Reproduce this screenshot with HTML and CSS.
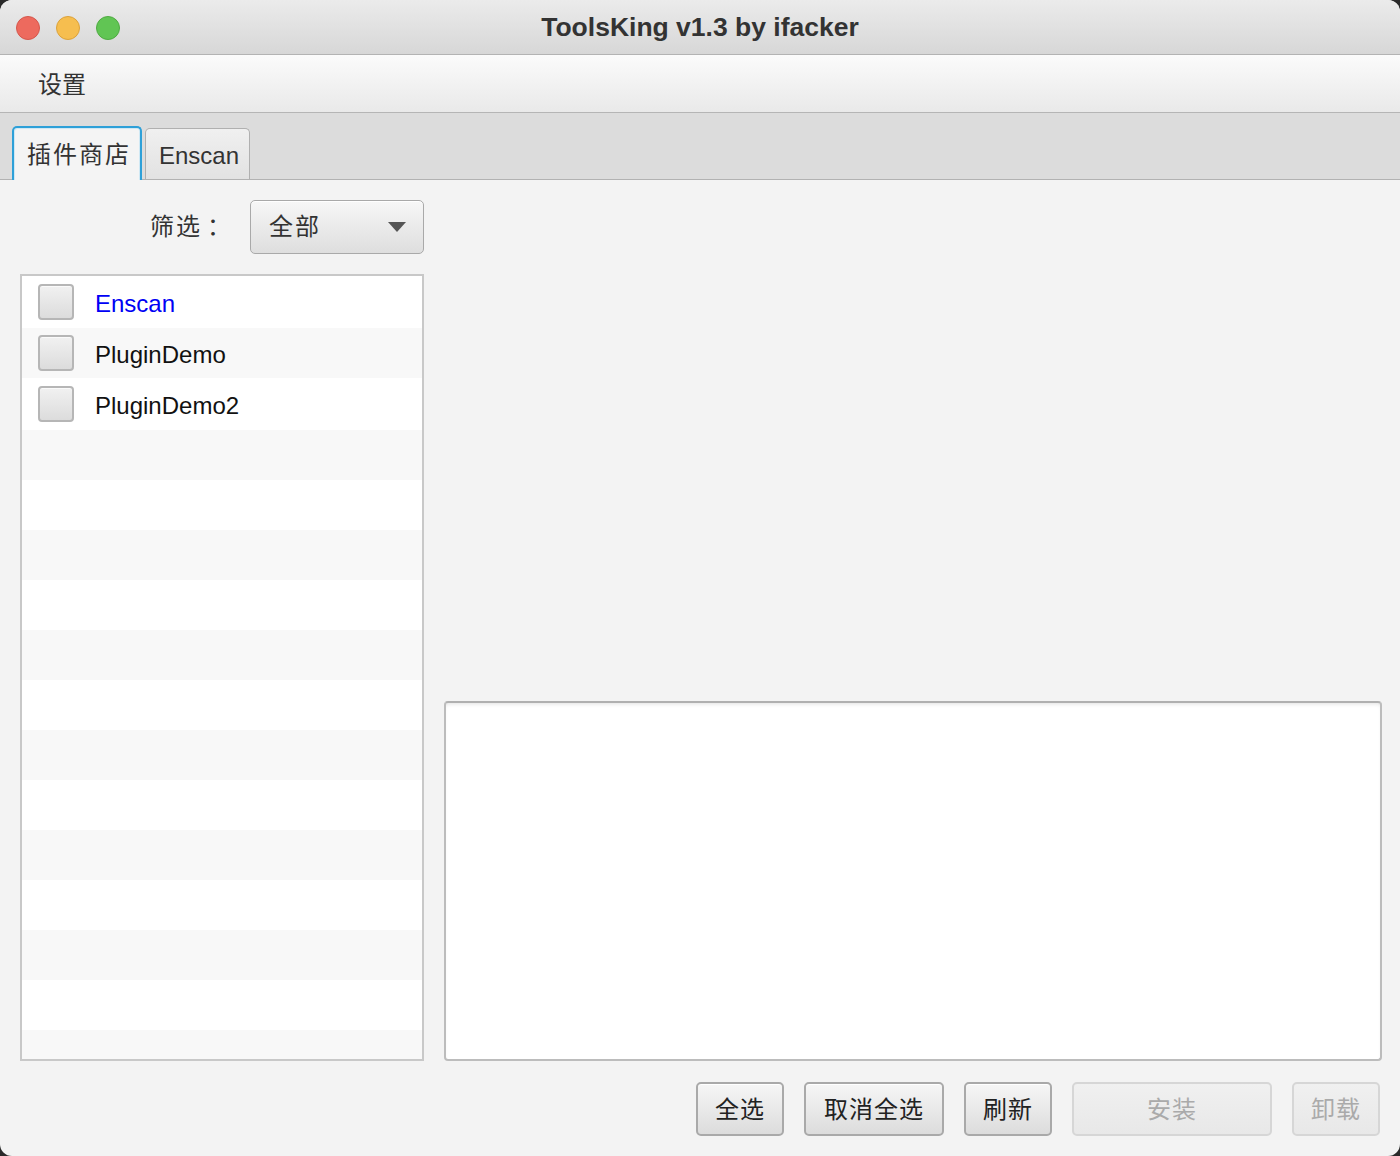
FILE: index.html
```html
<!DOCTYPE html>
<html lang="zh">
<head>
<meta charset="utf-8">
<title>ToolsKing v1.3 by ifacker</title>
<link rel="stylesheet" href="styles.css">
</head>
<body>
<div class="window">
  <div class="titlebar">
    <div class="lights">
      <span class="light red"></span>
      <span class="light yellow"></span>
      <span class="light green"></span>
    </div>
    <div class="title">ToolsKing v1.3 by ifacker</div>
  </div>
  <div class="menubar"><span class="menu">设置</span></div>
  <div class="tabbar">
    <div class="tab active">插件商店</div>
    <div class="tab">Enscan</div>
  </div>
  <div class="content">
    <div class="main">
      <div class="left">
        <div class="filter">
          <span class="filter-label">筛选<span class="colon">：</span></span>
          <div class="combo"><span class="combo-text">全部</span><span class="arrow"></span></div>
        </div>
        <div class="list">
          <div class="row r1"><span class="check"></span><span class="name blue">Enscan</span></div>
          <div class="row r2 alt"><span class="check"></span><span class="name">PluginDemo</span></div>
          <div class="row r3"><span class="check"></span><span class="name">PluginDemo2</span></div>
          <div class="row alt"></div>
          <div class="row"></div>
          <div class="row alt"></div>
          <div class="row"></div>
          <div class="row alt"></div>
          <div class="row"></div>
          <div class="row alt"></div>
          <div class="row"></div>
          <div class="row alt"></div>
          <div class="row"></div>
          <div class="row alt"></div>
          <div class="row"></div>
          <div class="row alt"></div>
        </div>
      </div>
      <div class="right">
        <div class="textarea"></div>
      </div>
    </div>
    <div class="buttons">
      <button class="btn w88">全选</button>
      <button class="btn w140">取消全选</button>
      <button class="btn w88">刷新</button>
      <button class="btn w200 disabled">安装</button>
      <button class="btn w88 disabled">卸载</button>
    </div>
  </div>
</div>
</body>
</html>
```

FILE: styles.css
```css
html, body {
  margin: 0;
  padding: 0;
  background: #2a2a2a;
}
body {
  width: 1400px;
  height: 1156px;
  overflow: hidden;
  font-family: "Liberation Sans", "Noto Sans CJK SC", sans-serif;
}
.window {
  width: 1400px;
  height: 1156px;
  border-radius: 12px;
  overflow: hidden;
  background: #f3f3f3;
  display: flex;
  flex-direction: column;
}
.titlebar {
  height: 54px;
  flex: none;
  border-bottom: 1px solid #b3b3b3;
  background: linear-gradient(#ebebeb, #d7d7d7);
  position: relative;
  display: flex;
  align-items: center;
  justify-content: center;
}
.lights {
  position: absolute;
  left: 16px;
  top: 16px;
  display: flex;
  gap: 16px;
}
.light {
  width: 22px;
  height: 22px;
  border-radius: 50%;
  border: 1px solid rgba(0,0,0,0.12);
}
.red { background: #ed6a5e; border-color: #d5574c; }
.yellow { background: #f6be4f; border-color: #dca23b; }
.green { background: #61c554; border-color: #4fab42; }
.title {
  font-family: "Liberation Sans", sans-serif;
  font-weight: bold;
  font-size: 26.5px;
  color: #333;
  padding-top: 1px;
}
.menubar {
  height: 57px;
  flex: none;
  border-bottom: 1px solid #b5b5b5;
  background: linear-gradient(#fbfbfb, #e9e9e9);
  display: flex;
  align-items: center;
  padding-left: 38px;
}
.menu {
  font-family: "Noto Sans CJK SC", sans-serif;
  font-size: 24px;
  color: #333;
  line-height: 1;
  padding-bottom: 1px;
}
.tabbar {
  height: 66px;
  flex: none;
  border-bottom: 1px solid #b2b2b2;
  background: #dcdcdc;
  display: flex;
  align-items: flex-end;
  padding-left: 12px;
  gap: 3px;
}
.tab {
  height: 51px;
  box-sizing: border-box;
  padding: 3px 10px 0 13px;
  border: 1px solid #b0b0b0;
  border-bottom: none;
  border-radius: 5px 5px 0 0;
  background: linear-gradient(#f0f0f0, #e2e2e2);
  font-size: 24px;
  color: #333;
  display: flex;
  align-items: center;
  font-family: "Liberation Sans", "Noto Sans CJK SC", sans-serif;
}
.tab.active {
  height: 54px;
  margin-bottom: -1px;
  width: 130px;
  padding: 0 0 3px 13px;
  border: 2px solid #2ea0d8;
  border-bottom: none;
  background: #f4f4f4;
  box-shadow: inset 1px 1px 0 #cfe8f4, inset -1px 0 0 #cfe8f4;
  font-family: "Noto Sans CJK SC", sans-serif;
  letter-spacing: 2px;
}
.content {
  flex: 1;
  display: flex;
  flex-direction: column;
  padding: 20px 18px 20px 20px;
  min-height: 0;
}
.main {
  flex: 1;
  display: flex;
  gap: 20px;
  min-height: 0;
}
.left {
  width: 404px;
  flex: none;
  display: flex;
  flex-direction: column;
  gap: 20px;
}
.filter {
  height: 54px;
  display: flex;
  align-items: center;
  justify-content: flex-end;
  gap: 17px;
}
.filter-label {
  font-family: "Noto Sans CJK SC", sans-serif;
  font-size: 24px;
  color: #333;
  padding-bottom: 5px;
  letter-spacing: 2px;
}
.colon {
  margin-left: 5px;
}
.combo {
  width: 174px;
  height: 54px;
  box-sizing: border-box;
  border: 1px solid #a9a9a9;
  border-radius: 5px;
  background: linear-gradient(#f7f7f7, #dedede);
  box-shadow: inset 0 1px 0 #fff;
  display: flex;
  align-items: center;
  justify-content: space-between;
  padding: 0 17px 0 18px;
  font-family: "Noto Sans CJK SC", sans-serif;
  font-size: 24px;
  color: #333;
}
.combo-text {
  padding-bottom: 5px;
  letter-spacing: 2px;
}
.arrow {
  width: 0;
  height: 0;
  border-left: 9px solid transparent;
  border-right: 9px solid transparent;
  border-top: 10px solid #555;
}
.list {
  flex: 1;
  border: 2px solid #c8c8c8;
  background: #fff;
  overflow: hidden;
  min-height: 0;
}
.row {
  height: 50px;
  display: flex;
  align-items: center;
  padding-left: 16px;
  gap: 21px;
  background: #fff;
}
.row.alt { background: #f8f8f8; }
.row.r1 { height: 52px; }
.row.r3 { height: 52px; }
.check {
  width: 36px;
  height: 36px;
  box-sizing: border-box;
  border: 2px solid #b6b6b6;
  border-radius: 4px;
  background: linear-gradient(#f1f1f1, #dcdcdc);
  box-shadow: inset 0 1px 0 #fafafa;
}
.name {
  font-family: "Liberation Sans", sans-serif;
  font-size: 24px;
  color: #111;
  padding-top: 3px;
}
.name.blue { color: #0000f5; }
.right {
  flex: 1;
  display: flex;
  flex-direction: column;
  justify-content: flex-end;
}
.textarea {
  height: 360px;
  box-sizing: border-box;
  border: 2px solid #bcbcbc;
  border-top-color: #b0b0b0;
  border-radius: 4px;
  background: #fff;
  box-shadow: inset 0 3px 4px -2px rgba(0,0,0,0.12);
}
.buttons {
  display: flex;
  justify-content: flex-end;
  gap: 20px;
  margin-top: 21px;
  padding-right: 2px;
}
.btn {
  height: 54px;
  box-sizing: border-box;
  border: 2px solid #a9a9a9;
  border-radius: 5px;
  background: linear-gradient(#f6f6f6, #dcdcdc);
  box-shadow: inset 0 1px 0 #fff;
  font-family: "Noto Sans CJK SC", sans-serif;
  font-size: 24px;
  color: #222;
  padding: 0 0 4px 0;
  cursor: default;
  letter-spacing: 1px;
}
.btn.disabled {
  color: #aaa;
  border-color: #d6d6d6;
  background: linear-gradient(#f0f0f0, #e8e8e8);
  box-shadow: none;
}
.w88 { width: 88px; }
.w140 { width: 140px; }
.w200 { width: 200px; }
```
